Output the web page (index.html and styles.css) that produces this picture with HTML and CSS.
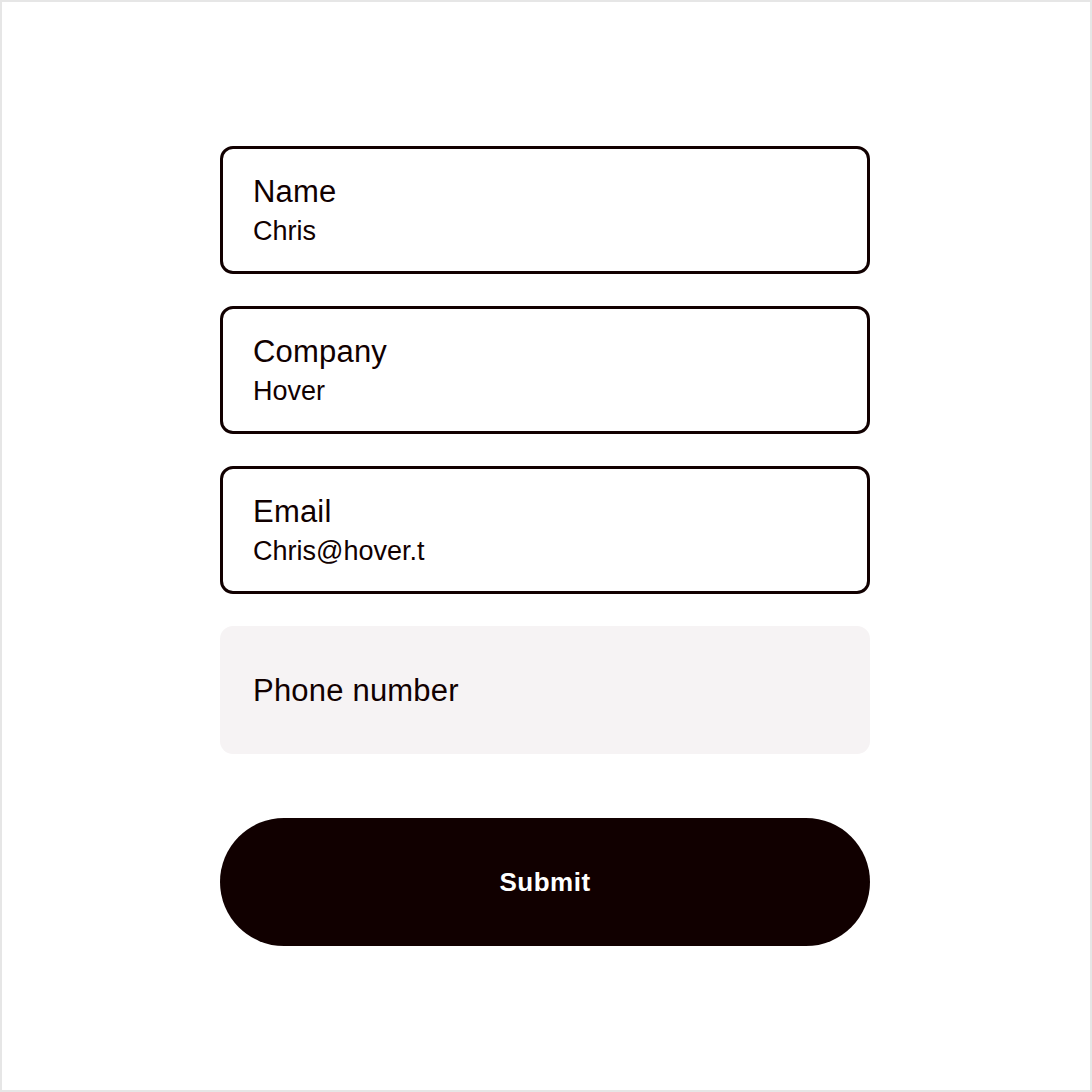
FILE: index.html
```html
<!DOCTYPE html>
<html lang="en">
<head>
<meta charset="utf-8">
<title>Form</title>
<link rel="stylesheet" href="styles.css">
</head>
<body>
<div class="page">
  <form class="form">
    <div class="field field--filled">
      <span class="field__label">Name</span>
      <span class="field__value">Chris</span>
    </div>
    <div class="field field--filled">
      <span class="field__label">Company</span>
      <span class="field__value">Hover</span>
    </div>
    <div class="field field--filled">
      <span class="field__label">Email</span>
      <span class="field__value">Chris@hover.t</span>
    </div>
    <div class="field field--empty">
      <span class="field__label">Phone number</span>
    </div>
    <button type="button" class="submit">Submit</button>
  </form>
</div>
</body>
</html>
```
FILE: styles.css
```css
* { box-sizing: border-box; }
html, body { margin: 0; padding: 0; background: #fff; }
body {
  font-family: "Liberation Sans", Arial, sans-serif;
  color: #110000;
}
.page {
  width: 1092px;
  height: 1092px;
  border: 2px solid #e6e6e6;
  padding: 144px 0 0 218px;
  display: flex;
  justify-content: flex-start;
}
.form {
  width: 650px;
  display: flex;
  flex-direction: column;
  gap: 32px;
}
.field {
  height: 128px;
  border-radius: 13px;
  padding: 0 30px;
  display: flex;
  flex-direction: column;
  justify-content: center;
}
.field--filled {
  border: 3px solid #110000;
  background: #fff;
  padding-top: 2px;
}
.field--empty {
  background: #f6f3f4;
  padding: 0 33px;
}
.field__label {
  font-size: 31px;
  line-height: 36px;
  letter-spacing: 0.2px;
}
.field__value {
  font-size: 27px;
  line-height: 36px;
  margin-top: 3px;
}
.field--empty .field__label { margin-top: 2px; }
.submit {
  margin-top: 32px;
  height: 128px;
  border: 0;
  border-radius: 64px;
  background: #110000;
  color: #fff;
  font-family: "Liberation Sans", Arial, sans-serif;
  font-weight: 700;
  font-size: 26px;
  letter-spacing: 0.5px;
  cursor: pointer;
}
```
